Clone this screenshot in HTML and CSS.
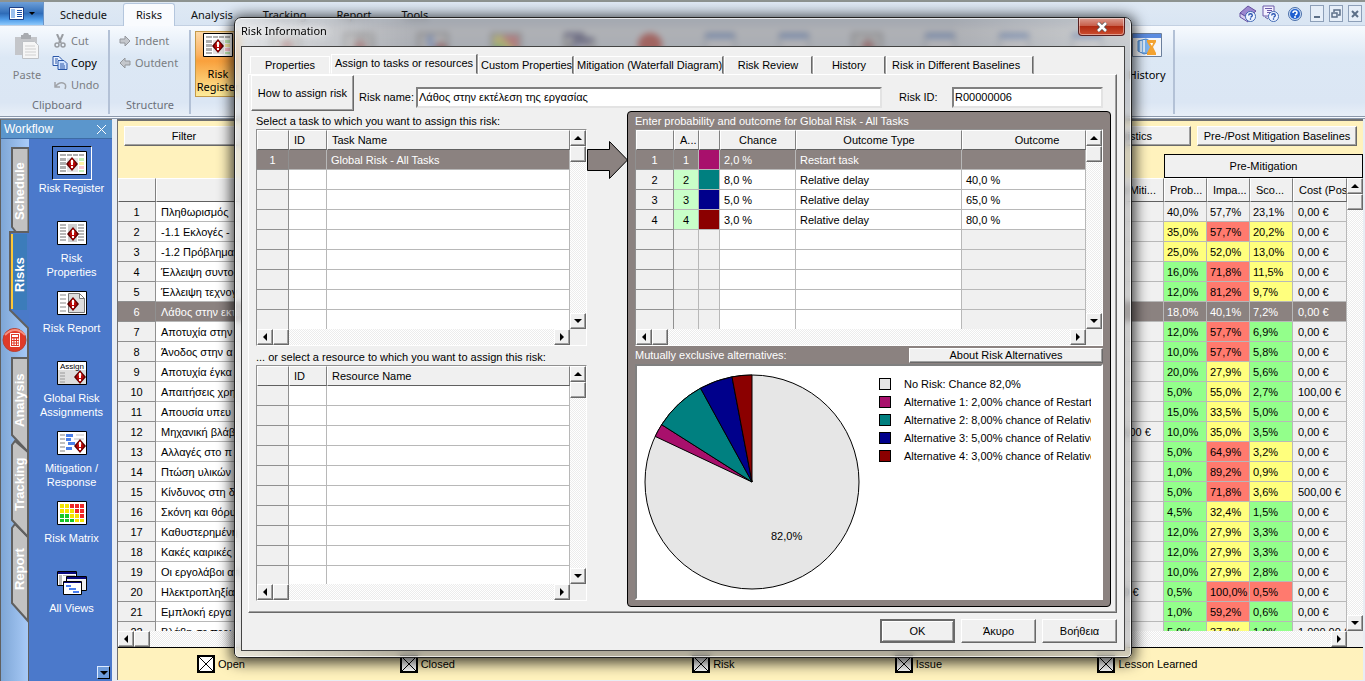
FILE: index.html
```html
<!DOCTYPE html>
<html lang="el">
<head>
<meta charset="utf-8">
<title>Risk Information</title>
<meta name="viewport" content="width=device-width, initial-scale=1">
<link rel="stylesheet" href="styles.css">
</head>
<body>
<svg class="defs" aria-hidden="true">
  <symbol id="gem" viewBox="0 0 12 14"><path d="M6 0L12 7L6 14L0 7Z" fill="#5a0000"/><path d="M6 1L10 7L6 13L2 7Z" fill="#b80808"/><path d="M6 2L8 5L6 7L4 5Z" fill="#e06050"/><path d="M5 3h2v5H5zM5 9h2v2H5z" fill="#fff"/></symbol>
  <symbol id="frame" viewBox="0 0 30 24"><path d="M.5.5h29v23H.5z" fill="#fff" stroke="#000"/></symbol>
  <symbol id="register" viewBox="0 0 30 24"><use href="#frame"/><path d="M3 3h6v2H3zM10 3h5v2h-5zM16 3h5v2h-5zM22 3h5v2h-5zM3 7h6v3H3zM3 11h6v3H3zM3 15h6v3H3zM3 19h6v2H3z" fill="#b0b0b0"/><path d="M10 7h11v14H10z" fill="#e4e4e4"/><path d="M22 7h5v3h-5zM22 19h5v2h-5z" fill="#c4f0b8"/><path d="M22 11h5v3h-5z" fill="#fff3a8"/><path d="M22 15h5v3h-5z" fill="#ffc8d0"/><use href="#gem" x="9" y="6" width="12" height="14"/></symbol>
  <symbol id="props" viewBox="0 0 30 24"><use href="#frame"/><path d="M3 3h6v2H3zM3 6h6v2H3zM3 9h6v2H3zM3 12h6v2H3zM3 15h6v2H3zM3 18h6v2H3zM21 3h6v2h-6zM21 6h6v2h-6zM21 9h6v2h-6zM21 12h6v2h-6zM21 15h6v2h-6zM21 18h6v2h-6z" fill="#b8b8b8"/><path d="M11 3h9v18h-9z" fill="#d0d0d0"/><use href="#gem" x="10" y="6" width="12" height="14"/></symbol>
  <symbol id="report" viewBox="0 0 30 24"><use href="#frame"/><path d="M3 3h6v2H3zM3 7h6v2H3zM3 11h6v2H3zM3 15h6v2H3zM3 19h6v2H3z" fill="#c4c4c4"/><path d="M11.500 2.500h11l5 5v14h-16z" fill="#ddd" stroke="#777"/><path d="M22.500 2.500v5h5z" fill="#fff" stroke="#777"/><use href="#gem" x="10" y="6" width="12" height="14"/></symbol>
  <symbol id="assign" viewBox="0 0 30 24"><use href="#frame"/><path d="M1 9h28v14H1z" fill="#ddd"/><path d="M3 11h5v2H3zM3 14h5v2H3zM3 17h5v2H3zM3 20h5v2H3z" fill="#bbb"/><text x="3" y="8" class="icon-text">Assign</text><use href="#gem" x="17" y="9" width="12" height="14"/></symbol>
  <symbol id="mitigate" viewBox="0 0 30 24"><use href="#frame"/><path d="M3 3h5v2H3zM3 7h5v2H3zM3 11h5v2H3zM3 15h5v2H3zM3 19h5v2H3z" fill="#c0c0c0"/><path d="M9 3h7v3H9zM9 7h5v3H9zM11 11h7v3h-7zM9 16h6v3H9z" fill="#4a7fe8"/><path d="M19 3h8v2h-8zM17 7h10v2H17z" fill="#e0e0e0"/><use href="#gem" x="17" y="8" width="12" height="14"/></symbol>
  <symbol id="matrix" viewBox="0 0 30 24"><use href="#frame"/><path d="M3 3h4v4H3zM8 3h4v4H8zM3 8h4v4H3zM8 8h4v4H8zM13 8h4v4h-4zM13 13h4v4h-4zM18 13h4v4h-4zM18 18h4v3h-4zM23 18h4v3h-4z" fill="#f4e400"/><path d="M13 3h4v4h-4zM18 3h4v4h-4zM23 3h4v4h-4zM18 8h4v4h-4zM23 8h4v4h-4zM23 13h4v4h-4z" fill="#f02828"/><path d="M3 13h4v4H3zM8 13h4v4H8zM3 18h4v3H3zM8 18h4v3H8zM13 18h4v3h-4z" fill="#18c828"/></symbol>
  <symbol id="views" viewBox="0 0 30 24"><path d="M.5.5h19v14H.5z" fill="#fff" stroke="#000"/><path d="M1 1h18v2H1z" fill="#0a0a80"/><path d="M2 4h3v10H2zM6 4h12v1H6z" fill="#bbb"/><path d="M9.500 5.500h20v14h-20z" fill="#f0f0f0" stroke="#000"/><path d="M10 6h19v2H10z" fill="#0a0a80"/><path d="M6.500 10.500h18v13h-18z" fill="#fff" stroke="#000"/><path d="M7 11h17v1H7z" fill="#0a0a80"/><path d="M9 14h5v2H9zM12 17h7v2h-7zM16 20h6v2h-6z" fill="#4a7ff0"/></symbol>
  <symbol id="window" viewBox="0 0 30 24"><path d="M.5.5h29v23H.5z" fill="#f4f6fa" stroke="#6b7f9c"/><path d="M1 1h28v4H1z" fill="#5b8be0"/></symbol>
  <symbol id="up" viewBox="0 0 8 8"><path d="M4 2L8 6H0Z"/></symbol>
  <symbol id="down" viewBox="0 0 8 8"><path d="M0 2H8L4 6Z"/></symbol>
  <symbol id="left" viewBox="0 0 8 8"><path d="M2 4L6 0V8Z"/></symbol>
  <symbol id="right" viewBox="0 0 8 8"><path d="M6 4L2 0V8Z"/></symbol>
  <symbol id="ask" viewBox="0 0 12 12"><circle cx="6" cy="6" r="5.500" fill="#eef4ff" stroke="#3a62b0"/><path d="M4 5q0-2 2-2t2 2q0 1-2 2M6 8v1.500" fill="none" stroke="#2450b0" stroke-width="1.400"/></symbol>
</svg>

<div class="app">
  <header>
    <nav class="tabbar">
      <button class="app-menu" aria-label="Menu">
        <svg width="26" height="13" viewBox="0 0 26 13"><path d="M.5.5h14v12H.5z" fill="#fff" stroke="#1c3f86"/><path d="M2 2h4v9H2z" fill="#9cc0ee"/><path d="M8 3h5v1H8zM8 5h5v1H8zM8 7h5v1H8zM8 9h5v1H8z" fill="#1c4fa8"/><path d="M20 5h6l-3 3z"/></svg>
      </button>
      <a href="#" class="rtab">Schedule</a><a href="#" class="rtab current">Risks</a><a href="#" class="rtab">Analysis</a><a href="#" class="rtab">Tracking</a><a href="#" class="rtab">Report</a><a href="#" class="rtab">Tools</a>
      <div class="window-tools">
        <button aria-label="Manual"><svg width="18" height="18" viewBox="0 0 18 18"><path d="M1 8L9 1L17 6L9 13Z" fill="#9b87cf" stroke="#6550a0"/><path d="M1 8v4l8 5v-4z" fill="#d7cff0" stroke="#6550a0"/><use href="#ask" x="6" y="6" width="11" height="11"/></svg></button>
        <button aria-label="Topics"><svg width="18" height="18" viewBox="0 0 18 18"><path d="M1 1h11v10H1z" fill="#f4f0ff" stroke="#6a5aa8"/><path d="M3 3.500h7M5 5.500h5M5 7.500h5M3 12l3 2" stroke="#6a5aa8"/><use href="#ask" x="6" y="6" width="11" height="11"/></svg></button>
        <button class="help" aria-label="Help"><svg width="14" height="14" viewBox="0 0 14 14"><circle cx="7" cy="7" r="6.500" fill="#c9dcf6" stroke="#4a6ea8"/><circle cx="7" cy="7" r="5" fill="#1f5fd0"/><path d="M5 6q0-2 2-2t2 2q0 1-2 2M7 9v2" fill="none" stroke="#fff" stroke-width="1.500"/></svg></button>
        <button class="wbtn" aria-label="Minimize"><svg width="10" height="10"><path d="M2 7h6v2H2z" fill="#5c6f88"/></svg></button>
        <button class="wbtn" aria-label="Restore"><svg width="10" height="10"><path d="M3 3V1h6v5H7M1 4h5v4H1z" fill="none" stroke="#5c6f88" stroke-width="1.500"/></svg></button>
        <button class="wbtn" aria-label="Close window"><svg width="10" height="10"><path d="M2 2l6 6M8 2l-6 6" stroke="#5c6f88" stroke-width="2"/></svg></button>
      </div>
    </nav>
    <div class="ribbon">
      <section class="group clipboard">
        <button class="big muted"><svg width="28" height="28" viewBox="0 0 28 28"><path d="M2 4h22v18H2z" fill="#c4c6ca"/><path d="M8 2h2l1-2h4l1 2h2v4H8z" fill="#a8abb0"/><path d="M9.500 8.500h12l4 4v13h-16z" fill="#f6f6f6" stroke="#bfc2c6"/><path d="M12 13h10M12 16h11M12 19h11M12 22h11" stroke="#d0d0d0"/></svg>Paste</button>
        <div class="stack">
          <button class="muted"><svg width="16" height="14" viewBox="0 0 16 14"><path d="M5 0l4 9M11 0L7 9" stroke="#9a9da2" stroke-width="2"/><circle cx="5" cy="11" r="2" fill="none" stroke="#9a9da2" stroke-width="1.500"/><circle cx="11" cy="11" r="2" fill="none" stroke="#9a9da2" stroke-width="1.500"/></svg>Cut</button>
          <button><svg width="16" height="14" viewBox="0 0 16 14"><path d="M1 .5h6l3 3v6H1z" fill="#e8f1ff" stroke="#2a57a8"/><path d="M6 4.500h6l3 3v6H6z" fill="#cfe2ff" stroke="#2a57a8"/><path d="M8 8h4M8 10h5M8 12h5M3 3h3M3 5h2M3 7h2" stroke="#2a57a8"/></svg>Copy</button>
          <button class="muted"><svg width="16" height="14" viewBox="0 0 16 14"><path d="M3 4v5h5M3 9q4-5 8-4t2 6" fill="none" stroke="#a0a3a8" stroke-width="1.500"/></svg>Undo</button>
        </div>
        <h2>Clipboard</h2>
      </section>
      <section class="group structure">
        <div class="stack">
          <button class="muted"><svg width="12" height="12" viewBox="0 0 12 12"><path d="M1 4h5V1l5 5-5 5V8H1z" fill="#c4c7cc" stroke="#94979c"/></svg>Indent</button>
          <button class="muted"><svg width="12" height="12" viewBox="0 0 12 12"><path d="M11 4H6V1L1 6l5 5V8h5z" fill="#c4c7cc" stroke="#94979c"/></svg>Outdent</button>
        </div>
        <h2>Structure</h2>
      </section>
      <section class="group views">
        <button class="big pressed"><svg width="30" height="24"><use href="#register"/></svg>Risk Register</button>
        <div class="strip" aria-hidden="true">
          <svg width="30" height="24"><use href="#props"/></svg><svg width="30" height="24"><use href="#report"/></svg><svg width="30" height="24"><use href="#mitigate"/></svg><svg width="30" height="24"><use href="#matrix"/></svg><svg width="30" height="24"><use href="#views"/></svg>
          <svg width="24" height="24"><circle cx="12" cy="12" r="12" fill="#d0392a"/></svg>
          <svg width="30" height="24"><use href="#window"/></svg><svg width="30" height="24"><use href="#window"/></svg><svg width="30" height="24"><use href="#props"/></svg><svg width="30" height="24"><use href="#window"/></svg><svg width="30" height="24"><use href="#window"/></svg><svg width="30" height="24"><use href="#window"/></svg>
        </div>
        <button class="big history"><svg width="30" height="24" viewBox="0 0 30 24"><use href="#window"/><path d="M6 8l8-2 6 3v10l-8 2-6-3z" fill="#7db4ee" stroke="#4a86cc"/><path d="M9 8v11M12 7v12" stroke="#dceeff" stroke-width="2"/><path d="M15 7h9v2l-3 5 3 6v2h-9v-2l3-6-3-5z" fill="#f3a332"/><path d="M18 10h3l-1 3z" fill="#fff"/></svg>History</button>
      </section>
      <div class="ribbon-rest"></div>
    </div>
  </header>

  <div class="workspace">
    <aside class="workflow">
      <div class="wf-title"><span>Workflow</span><button aria-label="Close workflow"><svg width="11" height="11"><path d="M1 1l9 9M10 1L1 10" stroke="#fff"/></svg></button></div>
      <div class="wf-body">
        <svg class="wf-tabs" width="28" height="542" viewBox="0 0 28 542">
          <path d="M27.500 93H15l-4-5V9h16.500z" fill="#c2c2c2" stroke="#606060" stroke-width="2"/>
          <path d="M28 93H9v78l19 18z" fill="#4a7ac8"/><path d="M12 95h14v76H12z" fill="#3c7cba"/><path d="M10 95h2v75h-2z" fill="#fcc838"/>
          <path d="M28 93H9v78l18 18v31" fill="none" stroke="#606060" stroke-width="2"/>
          <path d="M27 482l-16-18v-75l3-4 13 13z" fill="#c2c2c2" stroke="#606060" stroke-width="2"/>
          <path d="M27 398l-16-17v-75l3-4 13 11z" fill="#c2c2c2" stroke="#606060" stroke-width="2"/>
          <path d="M27 313l-16-17v-77h16z" fill="#c2c2c2" stroke="#606060" stroke-width="2"/>
          <path d="M27.500 480v62" stroke="#606060"/>
          <g class="wf-label"><a href="#"><text transform="translate(23 81) rotate(-90)">Schedule</text></a><a href="#"><text transform="translate(23 153) rotate(-90)">Risks</text></a><a href="#"><text transform="translate(23 288) rotate(-90)">Analysis</text></a><a href="#"><text transform="translate(23 372) rotate(-90)">Tracking</text></a><a href="#"><text transform="translate(23 451) rotate(-90)">Report</text></a></g>
          <circle cx="13.500" cy="201" r="11.500" fill="#e03a28" stroke="#b84030"/><path d="M4 196q10-10 20 0" fill="none" stroke="#f59080" stroke-width="2"/><path d="M9.500 194.500h9v13h-9z" fill="none" stroke="#fff"/><path d="M11 196h6v2h-6zM11 199.500h1.500v1.500H11zM13.500 199.500H15v1.500h-1.500zM16 199.500h1.500v1.500H16zM11 202h1.500v1.500H11zM13.500 202H15v1.500h-1.500zM16 202h1.500v1.500H16zM11 204.500h1.500v1.500H11zM13.500 204.500H15v1.500h-1.500zM16 204.500h1.500v1.500H16z" fill="#fff"/>
        </svg>
        <nav class="wf-items">
          <a href="#" class="active"><span><svg width="30" height="24"><use href="#register"/></svg></span>Risk Register</a>
          <a href="#"><span><svg width="30" height="24"><use href="#props"/></svg></span>Risk Properties</a>
          <a href="#"><span><svg width="30" height="24"><use href="#report"/></svg></span>Risk Report</a>
          <a href="#"><span><svg width="30" height="24"><use href="#assign"/></svg></span>Global Risk Assignments</a>
          <a href="#"><span><svg width="30" height="24"><use href="#mitigate"/></svg></span>Mitigation / Response</a>
          <a href="#"><span><svg width="30" height="24"><use href="#matrix"/></svg></span>Risk Matrix</a>
          <a href="#"><span><svg width="30" height="24"><use href="#views"/></svg></span>All Views</a>
          <button class="wf-more" aria-label="More"><svg width="8" height="8"><use href="#down"/></svg></button>
        </nav>
      </div>
    </aside>

    <main class="sheet">
      <div class="sheet-tools">
        <button class="btn">Filter</button><button class="btn stats">Statistics</button><button class="btn">Pre-/Post Mitigation Baselines</button>
      </div>
      <div class="band"><div>Pre-Mitigation</div></div>
      <div class="scrollgrid register">
        <div class="view">
          <table>
            <colgroup><col class="w38"><col><col class="w61"><col class="w43"><col class="w43"><col class="w43"><col class="w54"></colgroup>
            <thead><tr><th></th><th></th><th class="tail">Cost Miti...</th><th>Prob...</th><th>Impa...</th><th>Sco...</th><th>Cost (Pos</th></tr></thead>
            <tbody>
              <tr><th>1</th><td>Πληθωρισμός</td><td></td><td>40,0%</td><td>57,7%</td><td>23,1%</td><td>0,00 €</td></tr>
              <tr><th>2</th><td>-1.1 Εκλογές -</td><td></td><td class="y">35,0%</td><td class="r">57,7%</td><td class="y">20,2%</td><td>0,00 €</td></tr>
              <tr><th>3</th><td>-1.2 Πρόβλημα</td><td></td><td class="y">25,0%</td><td class="y">52,0%</td><td class="y">13,0%</td><td>0,00 €</td></tr>
              <tr><th>4</th><td>Έλλειψη συντο</td><td></td><td class="g">16,0%</td><td class="r">71,8%</td><td class="y">11,5%</td><td>0,00 €</td></tr>
              <tr><th>5</th><td>Έλλειψη τεχνογ</td><td></td><td class="g">12,0%</td><td class="r">81,2%</td><td class="y">9,7%</td><td>0,00 €</td></tr>
              <tr class="sel"><th>6</th><td>Λάθος στην εκτέλεση της εργασίας</td><td></td><td>18,0%</td><td>40,1%</td><td>7,2%</td><td>0,00 €</td></tr>
              <tr><th>7</th><td>Αποτυχία στην</td><td></td><td class="g">12,0%</td><td class="r">57,7%</td><td class="g">6,9%</td><td>0,00 €</td></tr>
              <tr><th>8</th><td>Άνοδος στην α</td><td></td><td class="g">10,0%</td><td class="r">57,7%</td><td class="g">5,8%</td><td>0,00 €</td></tr>
              <tr><th>9</th><td>Αποτυχία έγκα</td><td></td><td class="g">20,0%</td><td class="y">27,9%</td><td class="g">5,6%</td><td>0,00 €</td></tr>
              <tr><th>10</th><td>Απαιτήσεις χρη</td><td></td><td class="g">5,0%</td><td class="y">55,0%</td><td class="g">2,7%</td><td>100,00 €</td></tr>
              <tr><th>11</th><td>Απουσία υπευ</td><td></td><td class="g">15,0%</td><td class="y">33,5%</td><td class="g">5,0%</td><td>0,00 €</td></tr>
              <tr><th>12</th><td>Μηχανική βλάβ</td><td>500,00 €</td><td class="g">10,0%</td><td class="y">35,0%</td><td class="g">3,5%</td><td>0,00 €</td></tr>
              <tr><th>13</th><td>Αλλαγές στο π</td><td></td><td class="g">5,0%</td><td class="r">64,9%</td><td class="y">3,2%</td><td>0,00 €</td></tr>
              <tr><th>14</th><td>Πτώση υλικών</td><td></td><td class="g">1,0%</td><td class="r">89,2%</td><td class="y">0,9%</td><td>0,00 €</td></tr>
              <tr><th>15</th><td>Κίνδυνος στη δ</td><td></td><td class="g">5,0%</td><td class="r">71,8%</td><td class="y">3,6%</td><td>500,00 €</td></tr>
              <tr><th>16</th><td>Σκόνη και θόρυ</td><td></td><td class="g">4,5%</td><td class="y">32,4%</td><td class="g">1,5%</td><td>0,00 €</td></tr>
              <tr><th>17</th><td>Καθυστερημένη</td><td></td><td class="g">12,0%</td><td class="y">27,9%</td><td class="g">3,3%</td><td>0,00 €</td></tr>
              <tr><th>18</th><td>Κακές καιρικές</td><td></td><td class="g">12,0%</td><td class="y">27,9%</td><td class="g">3,3%</td><td>0,00 €</td></tr>
              <tr><th>19</th><td>Οι εργολάβοι απ</td><td></td><td class="g">10,0%</td><td class="y">27,9%</td><td class="g">2,8%</td><td>0,00 €</td></tr>
              <tr><th>20</th><td>Ηλεκτροπληξία</td><td>0,00 €</td><td class="g">0,5%</td><td class="r">100,0%</td><td class="r">0,5%</td><td>0,00 €</td></tr>
              <tr><th>21</th><td>Εμπλοκή εργα</td><td></td><td class="g">1,0%</td><td class="r">59,2%</td><td class="g">0,6%</td><td>0,00 €</td></tr>
              <tr><th>22</th><td>Βλάβη σε περι</td><td></td><td class="g">5,0%</td><td class="y">37,3%</td><td class="g">1,9%</td><td>1.000,00 €</td></tr>
            </tbody>
          </table>
        </div>
        <div class="vbar"><button aria-label="Up"><svg width="8" height="8"><use href="#up"/></svg></button><i></i><button class="end" aria-label="Down"><svg width="8" height="8"><use href="#down"/></svg></button></div>
        <div class="hbar"><button aria-label="Left"><svg width="8" height="8"><use href="#left"/></svg></button><i></i><button class="end" aria-label="Right"><svg width="8" height="8"><use href="#right"/></svg></button></div>
      </div>
      <footer class="legend">
        <label><input type="checkbox" checked>Open</label><label><input type="checkbox" checked>Closed</label><label><input type="checkbox" checked>Risk</label><label><input type="checkbox" checked>Issue</label><label><input type="checkbox" checked>Lesson Learned</label>
      </footer>
    </main>
  </div>

  <div class="dialog" role="dialog" aria-labelledby="dlg-title">
    <div class="dlg-bar"><h1 id="dlg-title">Risk Information</h1><button class="close" aria-label="Close"><svg width="12" height="10" viewBox="0 0 12 10"><path d="M2 1l8 8M10 1L2 9" stroke="#555" stroke-width="4"/><path d="M2 1l8 8M10 1L2 9" stroke="#fff" stroke-width="2.500"/></svg></button></div>
    <div class="client">
      <div class="dtabs" role="tablist">
        <button role="tab" class="t82">Properties</button><button role="tab" class="on">Assign to tasks or resources</button><button role="tab" class="t95">Custom Properties</button><button role="tab" class="t150">Mitigation (Waterfall Diagram)</button><button role="tab" class="t90">Risk Review</button><button role="tab" class="t74">History</button><button role="tab" class="t147 first">Risk in Different Baselines</button>
      </div>
      <div class="page">
        <div class="fields">
          <button class="btn howto">How to assign risk</button>
          <label for="rname">Risk name:</label><input id="rname" value="Λάθος στην εκτέλεση της εργασίας">
          <label for="rid" class="idlabel">Risk ID:</label><input id="rid" value="R00000006">
        </div>
        <div class="columns">
          <div class="pick">
            <p>Select a task to which you want to assign this risk:</p>
            <div class="scrollgrid fixed">
              <div class="view">
                <table>
                  <colgroup><col class="w32"><col class="w38"><col></colgroup>
                  <thead><tr><th></th><th>ID</th><th>Task Name</th></tr></thead>
                  <tbody>
                    <tr class="sel"><th>1</th><td></td><td>Global Risk - All Tasks</td></tr>
                    <tr><th></th><td></td><td></td></tr><tr><th></th><td></td><td></td></tr><tr><th></th><td></td><td></td></tr><tr><th></th><td></td><td></td></tr><tr><th></th><td></td><td></td></tr><tr><th></th><td></td><td></td></tr><tr><th></th><td></td><td></td></tr><tr><th></th><td></td><td></td></tr>
                  </tbody>
                </table>
              </div>
              <div class="vbar"><button aria-label="Up"><svg width="8" height="8"><use href="#up"/></svg></button><i></i><button class="end" aria-label="Down"><svg width="8" height="8"><use href="#down"/></svg></button></div>
              <div class="hbar"><button aria-label="Left"><svg width="8" height="8"><use href="#left"/></svg></button><i></i><button class="end" aria-label="Right"><svg width="8" height="8"><use href="#right"/></svg></button></div>
            </div>
            <p class="second">... or select a resource to which you want to assign this risk:</p>
            <div class="scrollgrid fill">
              <div class="view">
                <table>
                  <colgroup><col class="w32"><col class="w38"><col></colgroup>
                  <thead><tr><th></th><th>ID</th><th>Resource Name</th></tr></thead>
                  <tbody>
                    <tr><th></th><td></td><td></td></tr><tr><th></th><td></td><td></td></tr><tr><th></th><td></td><td></td></tr><tr><th></th><td></td><td></td></tr><tr><th></th><td></td><td></td></tr><tr><th></th><td></td><td></td></tr><tr><th></th><td></td><td></td></tr><tr><th></th><td></td><td></td></tr><tr><th></th><td></td><td></td></tr><tr><th></th><td></td><td></td></tr>
                  </tbody>
                </table>
              </div>
              <div class="vbar"><button aria-label="Up"><svg width="8" height="8"><use href="#up"/></svg></button><i></i><button class="end" aria-label="Down"><svg width="8" height="8"><use href="#down"/></svg></button></div>
              <div class="hbar"><button aria-label="Left"><svg width="8" height="8"><use href="#left"/></svg></button><i></i><button class="end" aria-label="Right"><svg width="8" height="8"><use href="#right"/></svg></button></div>
            </div>
          </div>
          <svg class="arrow" width="41" height="38" viewBox="0 0 41 38"><path d="M.5 8.500h22V.5L40.500 19l-18 18.500v-8H.5z" fill="#8b8280" stroke="#000"/></svg>
          <div class="outcome">
            <p>Enter probability and outcome for Global Risk - All Tasks</p>
            <div class="scrollgrid fixed">
              <div class="view">
                <table class="alts">
                  <colgroup><col class="w38"><col class="w25"><col class="w21"><col class="w76"><col class="w166"><col></colgroup>
                  <thead><tr><th></th><th>A...</th><th></th><th>Chance</th><th>Outcome Type</th><th class="oc">Outcome</th></tr></thead>
                  <tbody>
                    <tr class="sel"><th>1</th><td>1</td><td class="c1"></td><td>2,0 %</td><td>Restart task</td><td></td></tr>
                    <tr><th>2</th><td class="lg">2</td><td class="c2"></td><td>8,0 %</td><td>Relative delay</td><td>40,0 %</td></tr>
                    <tr><th>3</th><td class="lg">3</td><td class="c3"></td><td>5,0 %</td><td>Relative delay</td><td>65,0 %</td></tr>
                    <tr><th>4</th><td class="lg">4</td><td class="c4"></td><td>3,0 %</td><td>Relative delay</td><td>80,0 %</td></tr>
                    <tr class="blank"><th></th><td></td><td></td><td></td><td></td><td></td></tr><tr class="blank"><th></th><td></td><td></td><td></td><td></td><td></td></tr><tr class="blank"><th></th><td></td><td></td><td></td><td></td><td></td></tr><tr class="blank"><th></th><td></td><td></td><td></td><td></td><td></td></tr><tr class="blank"><th></th><td></td><td></td><td></td><td></td><td></td></tr>
                  </tbody>
                </table>
              </div>
              <div class="vbar"><button aria-label="Up"><svg width="8" height="8"><use href="#up"/></svg></button><i></i><button class="end" aria-label="Down"><svg width="8" height="8"><use href="#down"/></svg></button></div>
              <div class="hbar"><button aria-label="Left"><svg width="8" height="8"><use href="#left"/></svg></button><i></i><button class="end" aria-label="Right"><svg width="8" height="8"><use href="#right"/></svg></button></div>
            </div>
            <div class="about"><span>Mutually exclusive alternatives:</span><button class="btn">About Risk Alternatives</button></div>
            <div class="chart">
              <svg width="216" height="216" viewBox="-108 -108 216 216" stroke="#000">
                <circle r="107" fill="#e6e6e6"/>
                <path d="M0 0L-96.800-45.600A107 107 0 0 1-90.300-57.300Z" fill="#a8106c"/>
                <path d="M0 0L-90.300-57.300A107 107 0 0 1-51.500-93.800Z" fill="#008080"/>
                <path d="M0 0L-51.500-93.800A107 107 0 0 1-20-105.100Z" fill="#00008b"/>
                <path d="M0 0L-20-105.100A107 107 0 0 1 0-107Z" fill="#8b0000"/>
                <text x="19" y="58" stroke="none">82,0%</text>
              </svg>
              <ul>
                <li><i class="c0"></i>No Risk: Chance 82,0%</li>
                <li><i class="c1"></i>Alternative 1: 2,00% chance of Restart</li>
                <li><i class="c2"></i>Alternative 2: 8,00% chance of Relative</li>
                <li><i class="c3"></i>Alternative 3: 5,00% chance of Relative</li>
                <li><i class="c4"></i>Alternative 4: 3,00% chance of Relative</li>
              </ul>
            </div>
          </div>
        </div>
      </div>
      <div class="actions"><button class="btn default">OK</button><button class="btn">Άκυρο</button><button class="btn">Βοήθεια</button></div>
    </div>
  </div>
</div>
</body>
</html>
```
FILE: styles.css
```css
* { box-sizing: border-box; }
body { margin: 0; font: 11px/14px "Liberation Sans", Arial, sans-serif; color: #000; background: #f0f0f0; }
button, input { font: inherit; color: inherit; }
button { padding: 0; border: 0; background: none; }
a { color: inherit; text-decoration: none; }
h1, h2, p, ul { margin: 0; padding: 0; font-weight: normal; list-style: none; }
svg { display: block; flex: none; }
.defs { display: none; }
.icon-text { font-size: 8px; }

.app { position: relative; display: flex; flex-direction: column; height: 100vh; min-height: 560px; overflow: hidden; }

/* Ribbon */
.tabbar { display: flex; height: 26px; border-top: 2px solid #8d9390; background: linear-gradient(#dfe9f4, #d9e5f3); font: 11px/22px "Noto Sans", sans-serif; border-bottom: 1px solid #c3d0e2; }
.app-menu { display: flex; align-items: center; justify-content: center; width: 44px; background: linear-gradient(#6d9fd8, #2f6cb8 50%, #4e9be8 75%, #8fc9fb); border-right: 1px solid #6a94c8; }
.rtab { padding: 2px 16px; color: #111; white-space: nowrap; }
.rtab.current { margin: 1px 1px -1px 0; padding: 0 12px; background: #f9fbfe; border: 1px solid #b4c6dd; border-bottom: 0; border-radius: 3px 3px 0 0; }
.rtab.current ~ .rtab { padding: 2px 15px; }
.window-tools { display: flex; align-items: center; gap: 5px; margin-left: auto; padding-right: 3px; }
.help { margin: 0 3px; }
.wbtn { display: flex; align-items: center; justify-content: center; width: 14px; height: 17px; border: 1px solid #8d9fb8; background: #e6eef8; }
.ribbon { display: flex; height: 93px; padding: 4px 0 0; font: 11px/22px "Noto Sans", sans-serif; background: linear-gradient(#f7fafe, #dce8f5 35%, #dbe6f4 85%, #e8eff8); border-bottom: 3px double #8b98ab; }
.group { display: grid; grid-template-rows: 68px 16px; align-content: start; column-gap: 8px; border-right: 2px solid #b3c1d6; margin-bottom: 2px; }
.group h2 { grid-column: 1 / -1; font-size: 11px; line-height: 14px; text-align: center; color: #6b7079; }
.muted { color: #7a7d82; }
.clipboard { grid-template-columns: 42px 1fr; width: 110px; padding-left: 6px; column-gap: 4px; }
.structure { width: 81px; padding-left: 9px; }
.structure h2 { padding-right: 8px; }
.big { display: flex; flex-direction: column; align-items: center; line-height: 13px; gap: 7px; padding-top: 3px; }
.stack { display: flex; flex-direction: column; }
.stack button { display: flex; align-items: center; gap: 3px; height: 22px; }
.structure .stack button { gap: 4px; }
.views { display: flex; flex: 1; padding-left: 4px; }
.pressed { width: 46px; height: 66px; padding-top: 1px; gap: 10px; border: 1px solid #c49a4a; background: linear-gradient(#fdd9a8, #fbb261 35%, #f9a03c 45%, #fdeb9a); margin-top: 1px; }
.strip { display: flex; flex: 1; justify-content: space-between; padding: 3px 20px 0 22px; }
.history { width: 34px; margin-right: 9px; gap: 11px; }
.ribbon-rest { width: 190px; }

/* Workflow pane */
.workspace { display: flex; flex: 1; min-height: 0; background: #e8edf4; }
.workflow { display: flex; flex-direction: column; width: 112px; border-left: 1px solid #606060; border-top: 1px solid #777; background: #4b79cb; }
.wf-title { display: flex; align-items: center; justify-content: space-between; height: 19px; padding: 0 5px 0 3px; color: #fff; background: #5b96cc; border-bottom: 1px solid #3d6ba5; font-size: 12px; }
.wf-body { display: flex; flex: 1; min-height: 0; overflow: hidden; }
.wf-tabs { background: linear-gradient(90deg, #7ea6d6, #a9cbf8); }
.wf-label { font: bold 13px "Liberation Sans", Arial, sans-serif; fill: #fff; }
.wf-items { position: relative; display: flex; flex-direction: column; flex: 1; color: #fff; text-align: center; padding: 6px 5px 0 7px; }
.wf-items a { height: 70px; display: flex; flex-direction: column; align-items: center; }
.wf-items span { display: block; padding: 5px; border: 1px solid transparent; }
.wf-items .active span { border-color: #000 #fff #fff #000; padding: 4px; margin: 1px 0; }
.wf-more { position: absolute; right: 2px; bottom: 2px; width: 13px; height: 13px; background: #6d9cdc; border: 1px solid #fff; border-color: #dceaff #000 #000 #dceaff; display: flex; align-items: center; justify-content: center; }

/* Risk sheet */
.sheet { display: flex; flex-direction: column; flex: 1; min-width: 0; margin: 0 2px 1px 5px; border-top: 2px solid #707070; border-left: 1px solid #707070; background: #fff2bd; }
.sheet-tools { display: flex; gap: 6px; padding: 5px 6px 0; height: 33px; }
.btn { border: 1px solid; border-color: #fff #696969 #696969 #fff; background: #f0f0f0; box-shadow: inset -1px -1px #a0a0a0; white-space: nowrap; }
.sheet-tools .btn { width: 160px; height: 20px; }
.sheet-tools .btn:first-child { width: 120px; }
.sheet-tools .stats { margin-left: auto; padding-left: 38px; }
.band { display: flex; justify-content: flex-end; }
.band div { width: 199px; height: 24px; border: 1px solid #000; background: #f0f0f0; text-align: center; line-height: 23px; }
.scrollgrid { display: grid; grid-template-columns: minmax(0, 1fr) 16px; grid-template-rows: minmax(0, 1fr) 16px; background: #f0f0f0; }
.register { flex: 1; min-height: 0; border-bottom: 1px solid #000; }
.view { overflow: hidden; min-height: 0; background: #fff; }
table { width: 100%; table-layout: fixed; border-collapse: separate; border-spacing: 0; }
th, td { height: 20px; padding: 1px 4px 0; font-weight: normal; text-align: left; white-space: nowrap; overflow: hidden; border-right: 1px solid #b8b8b8; border-bottom: 1px solid #b8b8b8; line-height: 14px; }
thead th { padding-top: 0; background: #f0f0f0; border: 1px solid; border-color: #fff #808080 #606060 #fff; }
tbody th { background: #f0f0f0; text-align: center; border-color: #909090; padding: 0 2px; }
.register thead th { height: 24px; padding-left: 5px; }
.register td { padding-left: 5px; }
.register td:nth-child(n+3) { background: #f0f0f0; padding: 1px 0 0 3px; }
.register td:nth-child(3), .register td:last-child { padding-left: 5px; }
.register .tail { direction: rtl; padding: 0 10px 0 0; unicode-bidi: plaintext; text-align: right; }
.register td.g { background: #93ff8b; }
.register td.y { background: #ffff7d; }
.register td.r { background: #ff7a6e; }
tr.sel td, tr.sel th, .register tr.sel td:nth-child(n) { background: #8b8280; color: #fff; }
.w21 { width: 21px; } .w25 { width: 25px; } .w32 { width: 32px; } .w38 { width: 38px; } .w43 { width: 43px; } .w54 { width: 54px; } .w61 { width: 61px; } .w76 { width: 76px; } .w166 { width: 166px; }
.vbar, .hbar { display: flex; background: repeating-conic-gradient(#fff 0 25%, #ececec 0 50%) 0 0 / 2px 2px; }
.vbar { flex-direction: column; }
.vbar button, .hbar button, .vbar i, .hbar i { display: flex; align-items: center; justify-content: center; width: 16px; height: 16px; background: #f0f0f0; border: 1px solid; border-color: #fff #696969 #696969 #fff; box-shadow: inset -1px -1px #a0a0a0; }
.vbar .end { margin-top: auto; }
.hbar .end { margin-left: auto; }
.legend { display: grid; grid-template-columns: 203fr 293fr 203fr 203fr 266fr; height: 32px; padding-left: 79px; }
.legend label { display: flex; align-items: center; gap: 3px; }
.legend input { appearance: none; width: 18px; height: 18px; margin: 0; border: 2px solid #000; background: linear-gradient(45deg, transparent 48%, #000 48% 52%, transparent 52%), linear-gradient(-45deg, transparent 48%, #000 48% 52%, transparent 52%), #fff; }

/* Dialog window */
.dialog { position: absolute; inset: 17px 233px 23px 234px; display: flex; flex-direction: column; padding: 0 6px 6px; border: 1px solid #222; border-radius: 7px 7px 5px 5px; background: linear-gradient(90deg, rgba(225,225,225,.75), rgba(130,130,134,.6) 20%, rgba(130,130,134,.6) 80%, rgba(180,180,180,.6)); backdrop-filter: blur(3px); box-shadow: inset 0 0 0 1px rgba(255,255,255,.7), 0 2px 14px 3px rgba(0,0,0,.75); }
.dlg-bar { display: flex; justify-content: space-between; height: 28px; }
.dlg-bar h1 { font: 11px/26px "Noto Sans", sans-serif; text-shadow: 0 0 6px #fff, 0 0 10px #fff; }
.close { display: flex; align-items: center; justify-content: center; width: 47px; height: 18px; border: 1px solid #5a2020; border-top: 0; border-radius: 0 0 4px 4px; background: linear-gradient(#dc9c90, #c8604c 45%, #b02a12 50%, #cc4e30); box-shadow: inset 0 0 0 1px rgba(255,255,255,.45); }
.client { display: flex; flex-direction: column; flex: 1; min-height: 0; padding: 7px 7px 7px 6px; border: 1px solid #444; background: #f0f0f0; }
.dtabs { display: flex; align-items: flex-end; height: 20px; padding-left: 2px; }
.dtabs button { height: 18px; padding: 0 2px; white-space: nowrap; border: 1px solid; border-color: #fff #696969 transparent #fff; box-shadow: 1px 0 #a0a0a0; margin-right: 1px; }
.dtabs .on { width: 146px; height: 20px; padding-bottom: 3px; }
.t74 { width: 72px; } .t82 { width: 80px; } .t90 { width: 88px; } .t95 { width: 95px; } .t147 { width: 147px; } .t150 { width: 149px; }
.dtabs .t82 { border-right-color: #fff; box-shadow: none; }
.dtabs .first { text-align: left; padding-left: 5px; }
.page { display: flex; flex-direction: column; flex: 1; min-height: 0; padding: 0 5px 5px 2px; border: 1px solid; border-color: #fff #696969 #696969 #fff; box-shadow: inset -1px -1px #a0a0a0; }
.fields { display: flex; align-items: flex-start; }
.howto { width: 103px; height: 36px; margin-right: 5px; }
.fields label { padding-top: 15px; width: 57px; white-space: nowrap; }
.fields input { min-width: 0; height: 21px; margin-top: 12px; padding: 0 2px 2px 1px; border: 2px solid; border-color: #808080 #e3e3e3 #e3e3e3 #808080; background: #fff; }
.fields #rname { flex: 459; }
.fields #rid { flex: 144; margin-right: 8px; }
.fields .idlabel { width: 70px; padding-left: 17px; }
.columns { display: grid; grid-template-columns: minmax(0, 331fr) 40px minmax(0, 484fr); flex: 1; min-height: 0; padding-left: 5px; }
.pick { display: flex; flex-direction: column; min-height: 0; padding: 3px 0 6px; }
.pick p { height: 15px; }
.pick .second { height: 19px; padding-top: 4px; }
.arrow { margin-top: 30px; }
.pick .scrollgrid, .outcome .scrollgrid { border: 1px solid; border-color: #909090 #fff #fff #909090; }
.fixed { height: 217px; }
.fill { flex: 1; min-height: 0; }
.outcome { display: flex; flex-direction: column; min-height: 0; padding: 2px 7px 6px; border: 1px solid #000; border-radius: 4px; background: #8b8280; color: #fff; }
.outcome p { height: 15px; }
.outcome .scrollgrid, .chart { color: #000; }
.alts td { padding-right: 0; }
.alts td:nth-child(2) { text-align: center; padding: 1px 0 0; }
.alts thead th:nth-child(2) { padding-left: 5px; }
.alts thead th:nth-child(n+4) { text-align: center; }
.alts thead .oc { padding-left: 30px; }
.alts .lg { background: #c8ffc8; }
.alts .blank td:nth-child(2), .alts .blank td:nth-child(3), .alts .blank td:nth-child(6) { background: #f0f0f0; }
.c0 { background: #e6e6e6; }
.c1, .alts .sel td.c1 { background: #a8106c; }
.c2 { background: #008080; }
.c3 { background: #00008b; }
.c4 { background: #8b0000; }
.about { display: flex; justify-content: space-between; height: 18px; padding-top: 2px; }
.about .btn { width: 194px; height: 15px; line-height: 13px; color: #000; }
.chart { display: flex; flex: 1; min-height: 0; padding: 8px 10px 0 7px; gap: 19px; border: 2px solid; border-color: #808080 #fff #fff #808080; background: #fff; overflow: hidden; }
.chart ul { flex: 1; min-width: 0; overflow: hidden; padding-top: 1px; }
.chart li { display: flex; align-items: center; gap: 13px; height: 18px; white-space: nowrap; }
.chart i { flex: none; width: 12px; height: 12px; border: 1px solid #000; }
.actions { display: flex; justify-content: flex-end; gap: 6px; padding-top: 6px; }
.actions .btn { width: 75px; height: 24px; }
.actions .default { border: 2px solid #696969; box-shadow: inset 1px 1px #fff, inset -1px -1px #a0a0a0; }
```
